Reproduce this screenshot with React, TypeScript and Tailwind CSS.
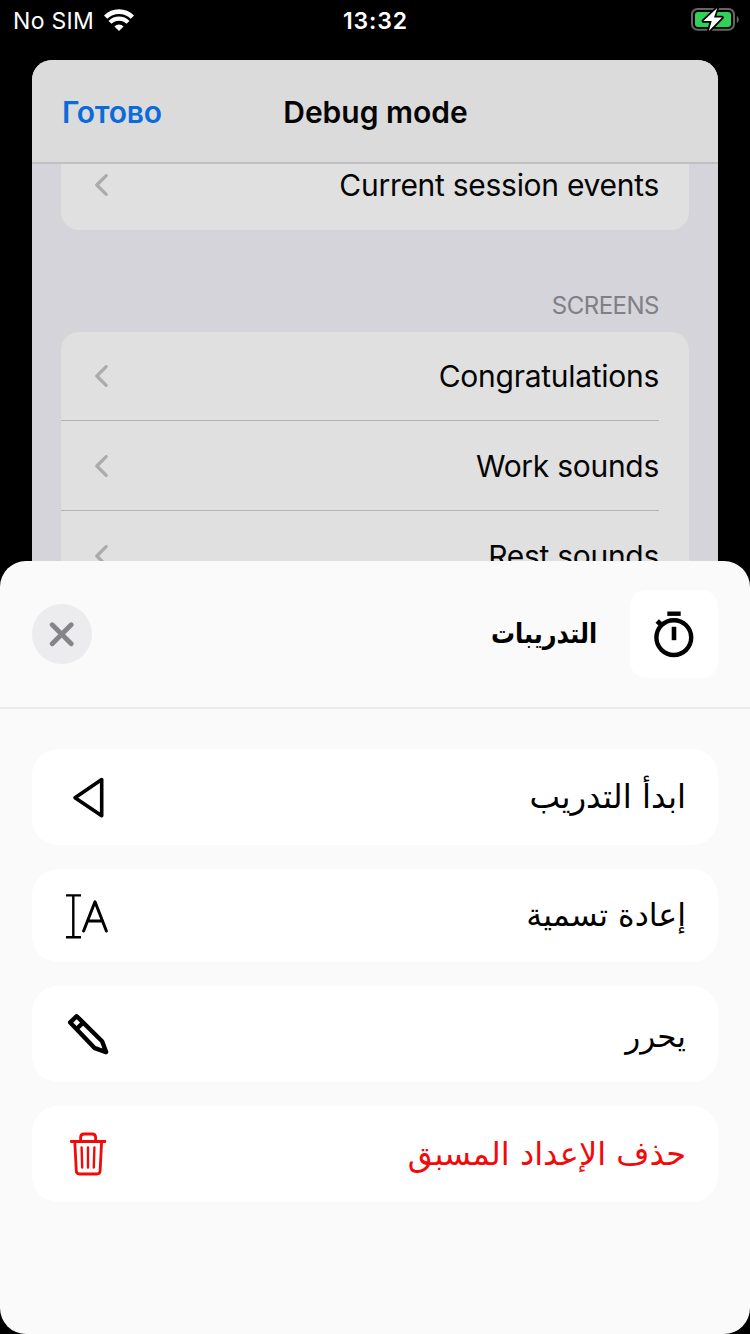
import type { ReactNode } from "react";

function Wifi() {
  return (
    <svg width="30" height="22" viewBox="0 0 30 22" fill="none" stroke="#fff">
      <path d="M1.6 8.2a19 19 0 0 1 26.8 0" strokeWidth="4.6" />
      <path d="M6 13.4a12.6 12.6 0 0 1 18 0" strokeWidth="4.2" />
      <path d="M10.4 17.4a6.5 6.5 0 0 1 9.2 0L15 22z" fill="#fff" stroke="none" />
    </svg>
  );
}

function Battery() {
  return (
    <svg width="50" height="26" viewBox="0 0 50 26">
      <rect x="2" y="2.9" width="42" height="20.8" rx="5.5" fill="none" stroke="#656565" strokeWidth="2" />
      <path d="M46.8 10v7q2-.9 2-3.5t-2-3.5z" fill="#656565" />
      <rect x="5" y="6" width="36" height="15" rx="3" fill="#30d158" />
      <path d="M27.2 2L13.4 15h8.3L18.8 25 32 11.5h-8z" fill="#fff" stroke="#000" strokeWidth="3.6" strokeLinejoin="round" paintOrder="stroke" />
    </svg>
  );
}

function Chevron() {
  return (
    <svg width="15" height="22" viewBox="0 0 15 22" fill="none" stroke="#ababae" strokeWidth="3.2" strokeLinecap="round" strokeLinejoin="round">
      <path d="M12.2 1.6L2.8 11l9.4 9.4" />
    </svg>
  );
}

function Row({ label, cls, line }: { label: string; cls: string; line?: boolean }) {
  return (
    <div className={"flex shrink-0 flex-col " + cls}>
      <div className="flex flex-1 items-center justify-between pl-[33px] pr-[30px]">
        <Chevron />
        <span className="whitespace-nowrap text-[30px] leading-9 tracking-[-0.28px] text-[#050505]">{label}</span>
      </div>
      {line && <div className="mr-[30px] h-px bg-[#b3b3b5]" />}
    </div>
  );
}

function Action({ label, cls, box, children }: { label: string; cls: string; box: string; children: ReactNode }) {
  return (
    <button className={"flex shrink-0 items-center justify-between rounded-[26px] bg-white pl-[30px] pr-[32px] " + box}>
      {children}
      <span dir="rtl" className={"whitespace-nowrap font-['DejaVu_Sans',sans-serif] leading-10 " + cls}>
        {label}
      </span>
    </button>
  );
}

export default function App() {
  return (
    <div className="relative flex h-[1334px] w-[750px] flex-col overflow-hidden bg-black font-['Inter',sans-serif]">
      <div className="grid h-[60px] shrink-0 grid-cols-3 items-start text-white">
        <div className="flex items-start gap-[10px] pl-[13px] pt-[7px]">
          <span className="text-[23px] leading-7 tracking-[0.3px]">No SIM</span>
          <div className="pt-[2px]">
            <Wifi />
          </div>
        </div>
        <span className="pl-px pt-[7px] text-center text-[23px] font-semibold leading-7 tracking-[0.9px]">13:32</span>
        <div className="flex justify-end pr-[10px] pt-[6px]">
          <Battery />
        </div>
      </div>

      <div className="mx-8 flex h-[501px] shrink-0 flex-col overflow-hidden rounded-t-[20px] bg-[#d5d4da]">
        <header className="grid h-[104px] shrink-0 grid-cols-[1fr_auto_1fr] items-center border-b-2 border-[#c0c0c2] bg-[#dbdbdb] pt-[2px] text-[30px] font-semibold">
          <span className="pl-[30px] tracking-[-0.25px] text-[#0b6bdb]">Готово</span>
          <h1 className="pl-px text-[#050505]">Debug mode</h1>
        </header>
        <div className="mx-[29px] flex h-[66px] shrink-0 flex-col justify-end overflow-hidden rounded-b-[18px] bg-[#e0e0e0]">
          <Row label="Current session events" cls="h-[90px]" />
        </div>
        <div className="flex h-[102px] shrink-0 items-end justify-end pb-[12px] pr-[59px] text-[24px] leading-7 tracking-[-0.5px] text-[#808085]">
          SCREENS
        </div>
        <div className="mx-[29px] flex shrink-0 flex-col rounded-t-[18px] bg-[#e0e0e0]">
          <Row label="Congratulations" cls="h-[89px]" line />
          <Row label="Work sounds" cls="h-[90px]" line />
          <Row label="Rest sounds" cls="h-[90px]" />
        </div>
      </div>

      <section className="flex h-[773px] shrink-0 flex-col rounded-[26px] bg-[#fafafa]">
        <div className="flex h-[148px] shrink-0 items-center justify-between border-b-2 border-[#e9e9ea] px-8">
          <button className="flex size-[60px] items-center justify-center rounded-full bg-[#ececee]">
            <svg width="26" height="26" viewBox="0 0 26 26" stroke="#858488" strokeWidth="4.8" strokeLinecap="round">
              <path d="M3.2 3.8l19 19M22.2 3.8l-19 19" />
            </svg>
          </button>
          <div className="flex items-center gap-[33px]">
            <h2 dir="rtl" className="origin-right scale-x-[0.87] font-['DejaVu_Sans',sans-serif] text-[27.5px] font-bold">
              التدريبات
            </h2>
            <div className="flex size-[88px] items-center justify-center rounded-[16px] bg-white">
              <svg width="48" height="52" viewBox="0 0 48 52" fill="none" stroke="#000">
                <circle cx="23.8" cy="29.6" r="17.4" strokeWidth="4.4" />
                <path d="M17.3 5.7h13.4" strokeWidth="4.4" />
                <path d="M24 18.8v13.4" strokeWidth="4.6" />
                <path d="M7.2 13l5 4.6" strokeWidth="5" />
              </svg>
            </div>
          </div>
        </div>

        <div className="flex flex-col gap-6 px-8 pt-10">
          <Action label="ابدأ التدريب" cls="text-[32.4px]" box="h-24">
            <svg width="52" height="52" viewBox="0 0 52 52" fill="none" stroke="#000" strokeWidth="3.6" strokeLinejoin="round">
              <path d="M39.7 8.6v36.2L13 26.7z" />
            </svg>
          </Action>
          <Action label="إعادة تسمية" cls="pb-[2px] text-[31.6px]" box="h-[93px]">
            <svg width="52" height="52" viewBox="0 0 52 52" fill="none" stroke="#000">
              <path d="M4 5.4h15M4 47.3h15M11.3 5.4v42" strokeWidth="2.4" />
              <path d="M21.6 41L33 11.8 44.4 41M25.6 31h14.8" strokeWidth="3" strokeLinecap="round" strokeLinejoin="round" />
            </svg>
          </Action>
          <Action label="يحرر" cls="pt-1 text-[31px]" box="h-24">
            <svg width="52" height="52" viewBox="0 0 52 52" fill="none" stroke="#000" strokeWidth="4.4" strokeLinejoin="round">
              <path d="M8.2 14.4l6.5-6.2 25.4 25 4 10.9-11.3-3.9zM15 20.5l6.4-6.1" />
            </svg>
          </Action>
          <Action label="حذف الإعداد المسبق" cls="pb-px text-[32px] text-[#f20a0a]" box="h-24">
            <svg width="52" height="52" viewBox="0 0 52 52" fill="none" stroke="#f20a0a" strokeWidth="2.8" strokeLinecap="round">
              <path d="M9.2 13.5h33.8M18.6 13V9.5q0-3.5 3.5-3.5h8q3.5 0 3.5 3.5V13M12.8 14l1.5 29q.2 3 3.2 3h17.4q3 0 3.2-3l1.5-29" />
              <path d="M19.6 19.5l.6 20M26 19.5v20M32.4 19.5l-.6 20" strokeWidth="2.4" />
            </svg>
          </Action>
        </div>
      </section>
    </div>
  );
}
